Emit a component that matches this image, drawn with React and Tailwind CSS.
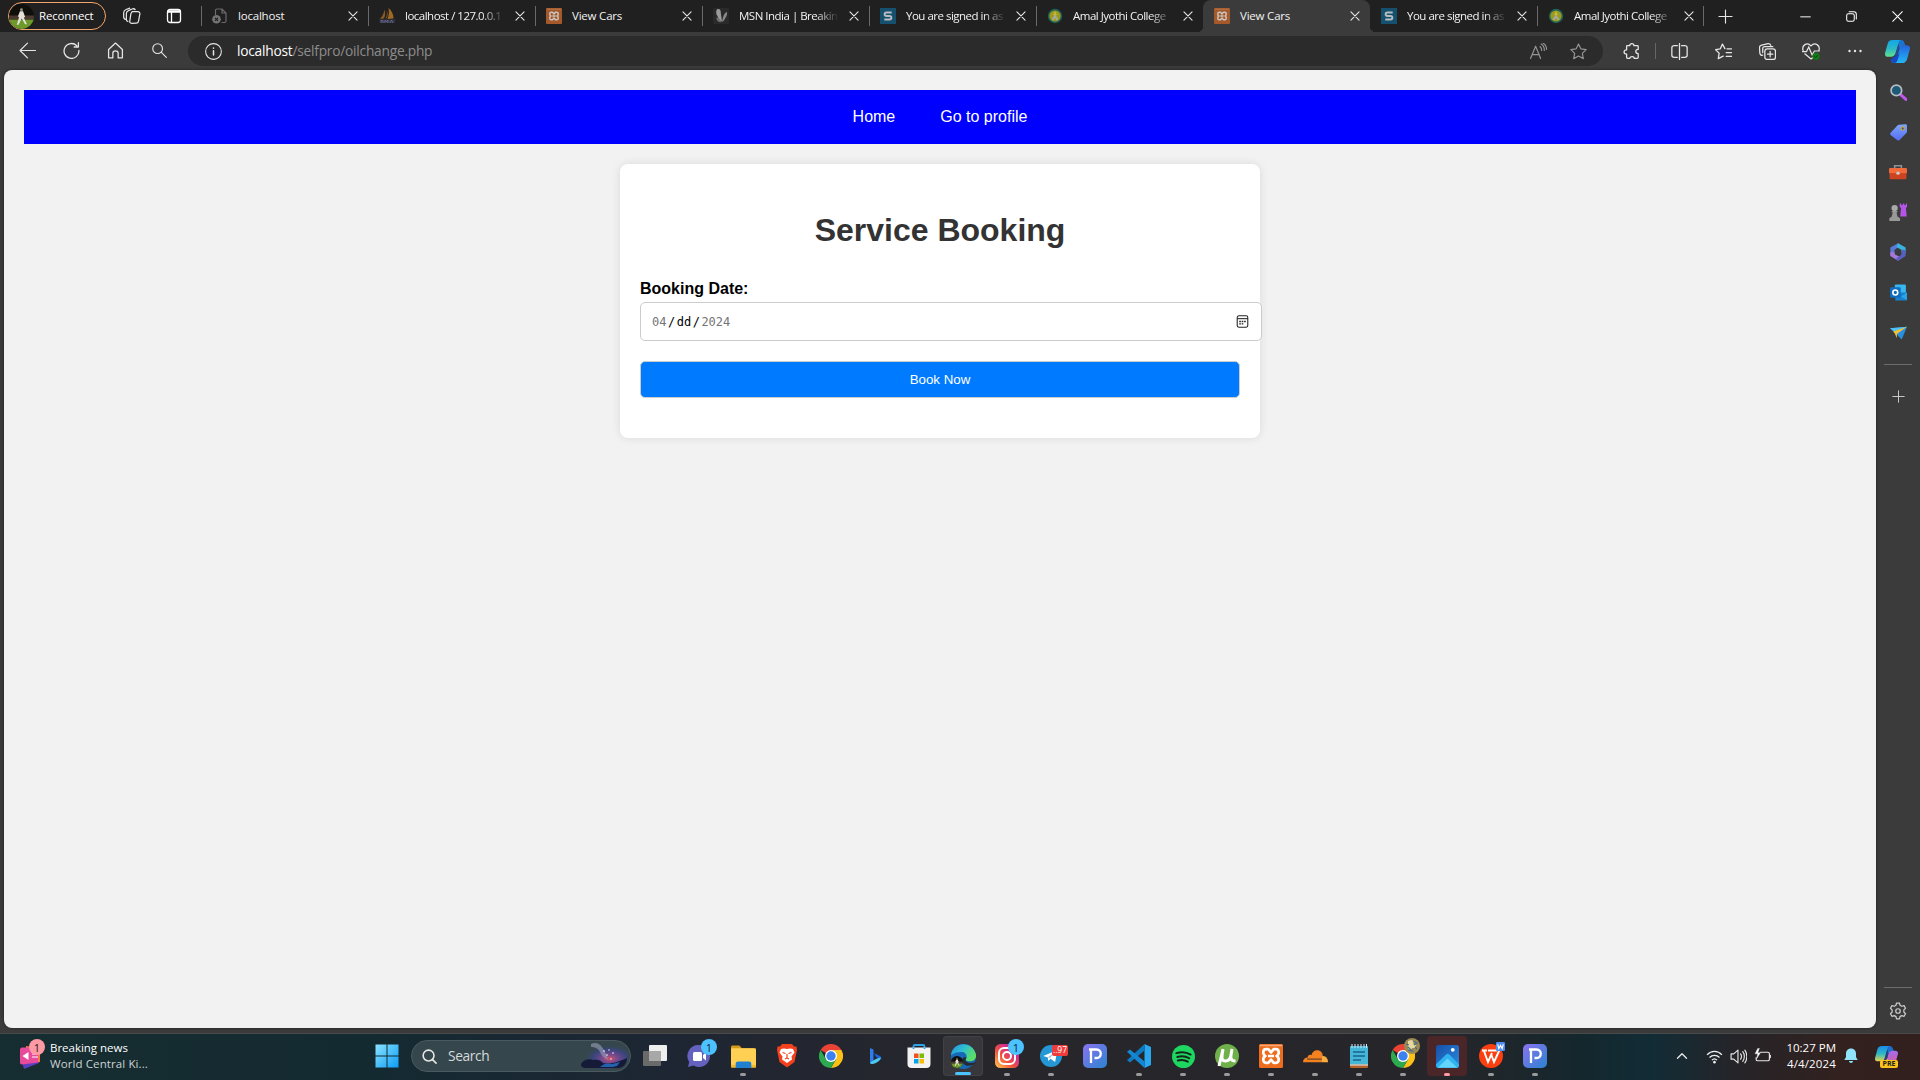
import React from "react";

const UI = "font-['Open_Sans','Noto_Sans',sans-serif]";

function Svg({ w = 16, h = w, vb = "0 0 16 16", children, className = "" }) {
  return (
    <svg width={w} height={h} viewBox={vb} fill="none" className={"shrink-0 " + className}>
      {children}
    </svg>
  );
}

const Line = ({ w = 16, children, c = "#e6e6e6", sw = 1.1, className }) => (
  <Svg w={w} className={className}>
    <g stroke={c} strokeWidth={sw} strokeLinecap="round" strokeLinejoin="round">{children}</g>
  </Svg>
);

/* ---------- favicons ---------- */

const PageIcon = () => (
  <Svg w={16}>
    <path d="M3.500 7V2.500c0-.8.5-1.500 1.500-1.500H10l4 4V13c0 1-.5 1.500-1.500 1.500H9.500M10 1v4h4" stroke="#6b6b6b" strokeWidth="1.200" />
    <circle cx="4.500" cy="11.300" r="4.300" fill="#747474" />
    <path d="M3 9.800l3 3M6 9.800l-3 3" stroke="#202020" strokeWidth="1.200" />
  </Svg>
);
const Pma = () => (
  <Svg w={17} h={16} vb="0 0 17 16">
    <path d="M5.500 1.500C6.500 5 6.300 8 5 10.500L1 11C3.500 8 5 5 5.500 1.500z" fill="#8a5a24" />
    <path d="M7.500 2C8.300 5 8 8 6.500 10.500h1C9 8 9 5 7.500 2z" fill="#8a5a24" />
    <path d="M9.500 0c3.500 3 5 6.500 5 10.500L8.500 11C10 7 10.200 4 9.500 0z" fill="#a06a22" />
    <path d="M0 11.500h16.500l-1 3.500H1.500z" fill="#34344a" />
    <path d="M2 15v-2.500h2V15M6 15v-3l1.500 2L9 12v3M11 15l1.500-3 1.500 3" stroke="#6c6c88" strokeWidth=".8" />
  </Svg>
);
const XamppMark = ({ c = "#c9c5c2" }) => (
  <path d="M5.200 4.200h1.300L8 6l1.500-1.800h1.300c1.800 0 2 3 .3 3.800 1.700.8 1.500 3.800-.3 3.800H9.500L8 10l-1.500 1.800H5.200c-1.800 0-2-3-.3-3.800-1.700-.8-1.500-3.800.3-3.800zM6.300 8h3.400" stroke={c} strokeWidth="1.500" strokeLinejoin="round" />
);
const Xampp = () => (
  <Svg w={16}>
    <rect width="16" height="16" rx="1" fill="#a5592a" />
    <path d="M1 1.200h14" stroke="#bd7a50" strokeWidth=".8" />
    <XamppMark />
  </Svg>
);
const Msn = () => (
  <Svg w={16}>
    <rect width="16" height="16" rx="1" fill="#2a2a2a" />
    <path d="M4.500 1c2.500-.5 3.500 1.500 3.300 4L9 13.500C6.500 13 5 10.500 4.500 8 2.800 6 2.800 2 4.500 1z" fill="#9a9a9a" />
    <path d="M13.800 4c1 2-1 6-3.300 9l-1.500 1C9.500 10 11 5 13.800 4z" fill="#8a8a8a" />
    <path d="M3.500 9.500c2.200 0 3.500 2 5 4.500C5.500 14.800 3 12.500 3.500 9.500z" fill="#6f6f6f" />
  </Svg>
);
const SIcon = () => (
  <Svg w={16}>
    <rect width="16" height="16" fill="#16506f" />
    <path d="M11.700 4.500H6.500c-2.500 0-2.500 3.500 0 3.500h3c2.500 0 2.500 3.500 0 3.500H4.300" stroke="#b5bcc0" strokeWidth="1.900" />
  </Svg>
);
const College = () => (
  <Svg w={16}>
    <circle cx="8" cy="8" r="7.200" fill="#1e6259" />
    <circle cx="8" cy="8" r="5.600" fill="#9a9a1e" />
    <path d="M8 3l2 3.500-2 1.500-2-1.500z" fill="#c8b53c" />
    <path d="M4.500 11.500L8 6.500l3.500 5-2 .8L8 10l-1.500 2.300z" fill="#a6a9a0" />
  </Svg>
);

/* ---------- browser tabs ---------- */

const tabs = [
  { t: "localhost", I: PageIcon, sep: true },
  { t: "localhost / 127.0.0.1", I: Pma, sep: true },
  { t: "View Cars", I: Xampp, sep: true },
  { t: "MSN India | Breakin", I: Msn, sep: true },
  { t: "You are signed in as", I: SIcon, sep: true },
  { t: "Amal Jyothi College", I: College, sep: true },
  { t: "View Cars", I: Xampp, active: true },
  { t: "You are signed in as", I: SIcon },
  { t: "Amal Jyothi College", I: College, sep: true },
];

function Tab({ t, I, sep, active }) {
  const long = t.length > 10;
  return (
    <div className={"relative flex h-8 w-[167px] shrink-0 items-center " + (active ? "rounded-t-lg bg-[#3b3b3b]" : "")}>
      {active && (
        <>
          <span className="absolute bottom-0 -left-[6px] size-[6px] bg-[radial-gradient(circle_at_top_left,#202020_6px,#3b3b3b_6.5px)]" />
          <span className="absolute -right-[6px] bottom-0 size-[6px] bg-[radial-gradient(circle_at_top_right,#202020_6px,#3b3b3b_6.5px)]" />
        </>
      )}
      <span className={"h-5 w-px shrink-0 " + (sep ? "bg-[#6a6a6a]" : "")} />
      <span className="ml-[10px] flex w-4 justify-center"><I /></span>
      <span
        className={
          "ml-[10px] w-[104px] shrink-0 text-[11.5px] whitespace-nowrap text-[#f2f2f2] " +
          (long
            ? "tracking-[-0.5px] [mask-image:linear-gradient(to_right,black_74%,transparent_96%)]"
            : "tracking-[-0.2px]")
        }
      >
        {t}
      </span>
      <Line w={10} sw={1.800} className="ml-[6px]"><path d="M1.500 1.500l13 13M14.500 1.500l-13 13" /></Line>
    </div>
  );
}

const Avatar = ({ size = 25 }) => (
  <Svg w={size} vb="0 0 24 24">
    <clipPath id={"av" + size}><circle cx="12" cy="12" r="12" /></clipPath>
    <g clipPath={`url(#av${size})`}>
      <rect width="24" height="24" fill="#0f0f0c" />
      <rect y="11" width="24" height="4" fill="#4a3a30" />
      <rect y="15" width="24" height="9" fill="#6d9a2a" />
      <circle cx="12" cy="5.500" r="1.400" fill="#9a8a7a" />
      <path d="M10.500 7h3l2 5.500-1.300.5 3 6.500h-1.800l-3.200-5.500-3 6H7.500l2.200-7.500-1.200-.5z" fill="#e4e0da" />
    </g>
  </Svg>
);

const Cell = ({ children, w = "w-11" }) => (
  <span className={"flex h-full shrink-0 items-center justify-center " + w}>{children}</span>
);

function TabStrip() {
  return (
    <div className="flex h-8 items-center bg-[#202020]">
      <div className="ml-2 flex h-7 w-[98px] items-center gap-[5px] rounded-full border border-[#f4a66d]">
        <Avatar />
        <span className="text-[11.5px] tracking-[-0.2px] text-white">Reconnect</span>
      </div>
      <span className="ml-[5px] flex"><Cell w="w-[42px]">
        <Line w={18}>
          <path d="M8 4.200l5.200 0c1.200 0 2 .8 1.800 2l-1.200 6.300c-.2 1.200-1 1.800-2 1.800L7.500 14.500c-1 0-1.700-.8-1.500-1.800L7 6z" />
          <path d="M4.300 12.800c-1-.2-1.300-.8-1.300-1.800V5.800C3 4.300 4 3.500 5.300 3l3-1.200c1-.4 2-.2 2.500.5M2 11C1 10.500.7 10 .6 9V5C.6 3.500 1.500 2.700 2.800 2.200L6 1" />
        </Line>
      </Cell></span>
      <Cell w="w-[42px]">
        <Line w={16} sw={1.300} c="#fff"><rect x="1.500" y="1.500" width="13" height="13" rx="2.500" /><path d="M2 4h12M2 3h12M5.500 4v10" /></Line>
      </Cell>
      <div className="ml-[6px] flex">{tabs.map((x, i) => <Tab key={i} {...x} />)}</div>
      <span className="-ml-px h-5 w-px bg-[#6a6a6a]" />
      <Cell w="w-[42px]"><Line w={15} sw={1.200}><path d="M8 1v14M1 8h14" /></Line></Cell>
      <span className="grow" />
      <Cell w="w-[46px]"><Line w={11} sw={1.400} c="#fff"><path d="M1 8.500h14" /></Line></Cell>
      <Cell w="w-[46px]"><Line w={11} sw={1.500} c="#fff"><rect x="1" y="4" width="11" height="11" rx="2.500" /><path d="M4.500 1.200h7c2 0 3.500 1.500 3.500 3.500v7" /></Line></Cell>
      <Cell w="w-[46px]"><Line w={11} sw={1.500} c="#fff"><path d="M1 1l14 14M15 1L1 15" /></Line></Cell>
    </div>
  );
}

const CopilotLogo = ({ w = 25, pre }) => (
  <Svg w={w} vb="0 0 24 24">
    <defs>
      <linearGradient id={"ca" + w} x1="0" y1="0" x2="0" y2="1">
        <stop offset="0" stopColor={pre ? "#1e8ae6" : "#14a5e8"} /><stop offset=".5" stopColor="#2ab8c8" /><stop offset="1" stopColor={pre ? "#e8d24a" : "#5fe08a"} />
      </linearGradient>
      <linearGradient id={"cb" + w} x1="0" y1="0" x2="0" y2="1">
        <stop offset="0" stopColor={pre ? "#a56cf0" : "#2463dd"} /><stop offset="1" stopColor={pre ? "#e0588a" : "#22b8f5"} />
      </linearGradient>
    </defs>
    <path d="M11 20l3-11c.6-2 2-3 4-3h2.500c3 0 4 1.500 3.300 4l-2.500 9c-.7 2.500-2 4-4.500 4H9c-2 0-3-1-3.400-3z" fill={`url(#cb${w})`} />
    <path d="M5.500 20c.5 2 1.500 3 3.500 3 1.700 0 2.500-1 3-2.500l2-6.500-4 2z" fill={pre ? "#f0b040" : "#1749c4"} />
    <path d="M13 4l-3 10c-.7 2-2 3-4 3H3C.5 17-.5 15.500.2 13l2.500-9C3.400 2 5 1 7 1h8c2 0 3 1.200 3.500 3 .3 1 .8 2 2 2H18c-2 0-3.500 1-4 3z" fill={`url(#ca${w})`} />
    <path d="M13 4c.5-2 1.200-3 2.500-3 1.700 0 2.700 1.200 3.200 3l.7 2H18c-2 0-3.500 1-4 3l-2 6-2.500 1z" fill="#1b55c8" opacity=".65" />
  </Svg>
);

function Toolbar() {
  return (
    <div className="flex h-[38px] items-center bg-[#3b3b3b] pl-[6px]">
      <div className="-ml-px mr-px flex h-full -translate-y-px">
        <Cell><Line w={17}><path d="M15.500 8H1M8 1L1 8l7 7" /></Line></Cell>
        <Cell><Line w={17} sw={1.200}><path d="M13 3.500a7 7 0 1 0 2 4.500M14.500 .7v4h-4" /></Line></Cell>
        <Cell><Line w={17} sw={1.200}><path d="M1.500 7L8 1l6.500 6v7.500c0 .4-.2.500-.6.500H10.500v-4.500c0-3-5-3-5 0V15H2c-.4 0-.5-.2-.5-.5z" /></Line></Cell>
        <Cell><Line w={15} sw={1.200}><circle cx="6" cy="6" r="5.200" /><path d="M10 10l5.300 5.300" /></Line></Cell>
      </div>
      <div className="ml-[6px] flex h-[30px] w-[1415px] shrink-0 items-center rounded-full bg-[#2b2b2b] pl-[17px]">
        <Line w={17} sw={1}><circle cx="8" cy="8" r="7.400" /><path d="M8 7.300v4M8 4.600v.4" strokeWidth="1.400" /></Line>
        <span className="ml-[15px] text-[13.75px] tracking-[-0.24px] text-[#8d8d8d]"><span className="text-white">localhost</span>/selfpro/oilchange.php</span>
        <span className="grow" />
        <Cell w="w-10">
          <Line w={17} c="#959595"><path d="M.5 14.500L5.300 3 10 14.500M2 11h6.500M9.500 3.500c1 .8 1.500 2 1.500 3.500M10.500 1c2 1.200 3 3 3 6M12.500.2C14.500 1.500 15.600 3.500 15.600 6" /></Line>
        </Cell>
        <span className="mr-[5px] h-full"><Cell w="w-10">
          <Line w={17} c="#959595"><path d="M8 1l2.200 4.500 5 .7-3.600 3.500.9 5L8 12.300l-4.500 2.400.9-5L.8 6.200l5-.7z" /></Line>
        </Cell></span>
      </div>
      <span className="ml-[6px] h-full"><Cell><Line w={17} sw={1.200}><path d="M4 2.500h2.300c0-2.500 4-2.500 4 0h3.200c.6 0 .8.3.8.8V6c-3 0-3 4 0 4v3.500c0 .6-.3.9-.9.900H10.500c0-2.200-4-2.200-4 0H4.300c-.6 0-.9-.3-.9-.9V10.500c-3.200 0-3.200-4 0-4V3.200c0-.4.2-.7.600-.7z" /></Line></Cell></span>
      <span className="mr-px ml-[2px] h-4 w-px shrink-0 bg-[#666]" />
      <Cell><Line w={17} sw={1.200}><path d="M8 .5v15M6 2.500H3.200C2 2.500.8 3 .8 4.500v7c0 1.400 1 2 2.400 2H6M10 2.500h2.800c1.400 0 2.400.6 2.400 2v7c0 1.400-1 2-2.400 2H10" /></Line></Cell>
      <Cell><Line w={17} sw={1.200}><path d="M11.300 5.500h4.200M10.500 9h5M10.500 12.500h5M9.300 5.300L7 1 5 5.500.6 6.300l3.300 3.200-.8 5.200 4.600-2.400" /></Line></Cell>
      <Cell><Line w={17} sw={1.200}><rect x="5.500" y="5.500" width="10" height="10" rx="2.200" /><path d="M10.500 8v5M8 10.500h5M3.500 11.500C2 11.800 1 11 .8 9.500L.5 4.500C.4 3 1 2.300 2.500 2l6-1.300c1.300-.2 2 .3 2.500 1.500M3.500 9V5.500c0-1.300.7-2 2-2H13" /></Line></Cell>
      <Cell>
        <Svg w={18}>
          <path d="M1 7.500C-.5 3 4.500-.5 8 3.500c3.500-4 8.500-.5 7 4M2.500 10.500L8 15l1.500-1M.5 8.500H4L6 4.500l3 7L11 8h4.500" stroke="#e6e6e6" strokeWidth="1.100" strokeLinecap="round" />
          <circle cx="12.500" cy="12.700" r="3.200" fill="#117a17" />
          <path d="M11 12.800l1.100 1 1.900-2" stroke="#073d0a" strokeWidth=".8" />
        </Svg>
      </Cell>
      <Cell><Svg w={16}><g fill="#e6e6e6"><circle cx="2.500" cy="8" r="1.200" /><circle cx="8" cy="8" r="1.200" /><circle cx="13.500" cy="8" r="1.200" /></g></Svg></Cell>
      <Cell w="w-10"><CopilotLogo /></Cell>
    </div>
  );
}

/* ---------- sidebar ---------- */

function Sidebar() {
  const row = "flex h-10 items-center justify-center";
  return (
    <div className="ml-px flex w-[42px] flex-col items-stretch pt-[2px]">
      <div className={row}><Svg w={17}><path d="M10.500 10.500l4.500 4" stroke="#c155f0" strokeWidth="2.800" strokeLinecap="round" /><circle cx="6" cy="6" r="5" fill="#1e5a78" stroke="#b5bcc0" strokeWidth="1.600" /></Svg></div>
      <div className={row}><Svg w={17}>
        <defs><linearGradient id="tg" x1="0" y1="0" x2="0" y2="1"><stop stopColor="#7aa8ff" /><stop offset="1" stopColor="#566cf0" /></linearGradient></defs>
        <path d="M8.500.8L14.500.3c1 0 1.500.5 1.500 1.500V7c0 .8-.3 1.300-.8 1.800L9 15c-.8.800-1.500.8-2.300 0L.8 10.500c-.8-.6-.8-1.500-.2-2.200L7 1.500c.4-.4.9-.6 1.500-.7z" fill="url(#tg)" />
        <circle cx="12" cy="4.200" r="1.500" fill="#39428a" stroke="#d8a91c" strokeWidth="1" />
      </Svg></div>
      <div className={row}><Svg w={18}>
        <path d="M5 5V2.500h6V5" stroke="#8d9296" strokeWidth="1.400" />
        <rect y="4.500" width="16" height="5" rx="1" fill="#f06a3a" /><rect x=".5" y="9" width="15" height="5.500" rx="1" fill="#cf4420" />
        <circle cx="8" cy="9" r="1.500" fill="#c9cdd0" />
      </Svg></div>
      <div className={row}><Svg w={18}>
        <path d="M9.500.5h1.300v1.200h1.400V.5h1.400v1.200H15V.5h1v3l-1 1 .8 7.500H10l.7-7.500-1.200-1z" fill="#b455e8" />
        <circle cx="5" cy="4.500" r="2.800" fill="#a9a9a9" /><path d="M2.500 7h5v1.200H6.700L7.500 12l2.300 1.500V16H.3v-2.500L2.500 12l.8-3.800h-.8z" fill="#989898" />
      </Svg></div>
      <div className={row}><Svg w={18}>
        <path d="M8 .2L1.200 4v7.500L5 9.500V6L10.500 2z" fill="#5a78d8" /><path d="M8 .2l6.800 3.800v5L11 8V6L6.500 3.500z" fill="#38b4e0" />
        <path d="M1.200 8v3.500L8 15.800l3.500-2.500L5 10V8.500z" fill="#a578dc" /><path d="M14.800 6.500v5L8 15.800l-2-1.500 5-3.800V6z" fill="#5560c0" />
      </Svg></div>
      <div className={row}><Svg w={17}>
        <rect x="4.500" y=".5" width="10.500" height="9" rx="1" fill="#38b6ee" /><path d="M5 8h11v6.500c0 .6-.4 1-1 1H5z" fill="#1482cf" /><path d="M16 8l-6 4 6 3z" fill="#2ba3e6" />
        <rect y="3" width="10" height="10" rx="1" fill="#0f6cbd" /><circle cx="5" cy="8" r="2.300" stroke="#fff" strokeWidth="1.500" />
      </Svg></div>
      <div className={row}><Svg w={17}><path d="M0 4L16 2.500l-5 12L6.500 10z" fill="#268fe0" /><path d="M0 4l16-1.500L4.500 7.500z" fill="#4dc3f5" /><path d="M3 7l13-4.500L6.500 9.500v4L4.500 9z" fill="#f5bf35" /></Svg></div>
      <div className="mx-[7px] mt-[12px] h-px bg-[#6c6c6c]" />
      <div className="mt-[11px] flex h-10 items-center justify-center"><Line w={13} sw={1.200} c="#ccc"><path d="M8 1v14M1 8h14" /></Line></div>
      <span className="grow" />
      <div className="mx-[7px] h-px bg-[#6c6c6c]" />
      <div className="flex h-[45px] items-center justify-center">
        <Line w={18} c="#ccc"><circle cx="8" cy="8" r="2" /><path d="M6.700.9h2.600l.5 2 1.500.9 2.100-.6 1.300 2.300-1.500 1.500v1.900l1.500 1.500-1.300 2.300-2.100-.6-1.500.9-.5 2H6.700l-.5-2-1.500-.9-2.100.6-1.300-2.300L2.800 8.900V7L1.300 5.500l1.300-2.300 2.100.6 1.500-.9z" /></Line>
      </div>
    </div>
  );
}

/* ---------- web page ---------- */

function WebPage() {
  return (
    <main className="ml-1 h-[958px] w-[1872px] rounded-lg bg-[#f2f2f2] p-5 font-['Liberation_Sans',Arial,sans-serif] text-base shadow-[0_0_3px_rgba(0,0,0,0.5)]">
      <nav className="flex h-[54px] items-center justify-center gap-[45px] bg-[#0000ff] leading-none text-white">
        <a>Home</a>
        <a>Go to profile</a>
      </nav>
      <section className="mx-auto mt-5 h-[274px] w-[640px] rounded-lg bg-white px-5 pt-px shadow-[0_0_10px_rgba(0,0,0,0.1)]">
        <h1 className="mt-[47px] text-center text-[32px] leading-9 font-bold text-[#333]">Service Booking</h1>
        <div className="mt-[32px] leading-[18px] font-bold text-black">Booking Date:</div>
        <div className="mt-[4px] flex h-[39px] w-[622px] items-center rounded-[5px] border border-[#ccc] bg-white pr-[12px] pl-[11px] font-['DejaVu_Sans_Mono',monospace] text-[12px] text-[#757575]">
          <span>04</span><span className="mx-[1.5px] text-black">/</span><span className="text-black">dd</span><span className="mx-[1.5px] text-black">/</span><span>2024</span>
          <span className="grow" />
          <Svg w={13}>
            <rect x="1.500" y="1" width="13" height="14" rx="2" stroke="#222" strokeWidth="1.300" /><path d="M1.500 4.500h13" stroke="#222" strokeWidth="1.300" />
            <path d="M4 8h2M7 8h2M10 8h2M4 11h2M7 11h2" stroke="#222" strokeWidth="1.600" />
          </Svg>
        </div>
        <button className="mt-[20px] flex h-[37px] w-[600px] items-center justify-center rounded-[5px] border border-[#ccc] bg-[#007bff] text-[13.33px] text-white">Book Now</button>
      </section>
    </main>
  );
}

/* ---------- taskbar ---------- */

const ChromeLogo = () => (
  <Svg w={24} vb="0 0 24 24">
    <path d="M12 12L1.600 6A12 12 0 0 1 22.400 6z" fill="#ea4335" />
    <path d="M12 6h10.400A12 12 0 0 1 12 24l5.200-9z" fill="#fbc116" />
    <path d="M6.800 15L1.600 6A12 12 0 0 0 12 24l5.200-9z" fill="#2da94f" />
    <circle cx="12" cy="12" r="6" fill="#fff" /><circle cx="12" cy="12" r="4.700" fill="#3b82f0" />
  </Svg>
);
const PIcon = () => (
  <Svg w={24} vb="0 0 24 24">
    <defs><linearGradient id="pg" x1="0" y1="0" x2="1" y2="1"><stop stopColor="#8a72f0" /><stop offset="1" stopColor="#2b84d0" /></linearGradient></defs>
    <rect width="24" height="24" rx="5" fill="url(#pg)" />
    <path d="M6 5.500h7.500c5.700 0 5.700 8.500 0 8.500H11.500M8 4.500v14.500" stroke="#fff" strokeWidth="2.300" />
  </Svg>
);
const Badge = ({ children, className }) => (
  <span className={"absolute flex items-center justify-center leading-none " + className}>{children}</span>
);

const apps = [
  { n: "task-view", el: <Svg w={24} vb="0 0 24 24"><rect x="6" y="1" width="18" height="16" rx="1" fill="#eee" /><rect y="7" width="18" height="15" rx="1" fill="#6a6a6a" /><rect x="6" y="7" width="12" height="10" fill="#a8a8a8" /></Svg> },
  { n: "chat", el: <Svg w={24} vb="0 0 24 24"><path d="M12 1a11 11 0 1 1-5.500 20.500L1 23l1.200-5A11 11 0 0 1 12 1z" fill="#6561bf" /><rect x="6" y="8" width="9" height="9" rx="1.500" fill="#fff" /><path d="M16 11l3-2.500v8L16 14z" fill="#fff" /></Svg>, badge: "chat" },
  { n: "files", run: true, el: <Svg w={25} vb="0 0 24 24"><path d="M0 3c0-1 .5-1.500 1.500-1.500H8L10.500 4H22v8H0z" fill="#d69a18" /><rect y="4" width="24" height="18.500" rx="1" fill="#ffd054" /><path d="M0 20h24v2.500H0z" fill="#f5b92e" /><path d="M4.500 23v-4c0-1.500 1-2.300 2.300-2.300h10.400c1.300 0 2.300.8 2.300 2.300v4z" fill="#1f7fd0" /></Svg> },
  { n: "brave", el: <Svg w={24} vb="0 0 24 24"><path d="M7 0h10l2 2.500 2.500 0L22 6l-2.500 12L12 23.500 4.500 18 2 6l.5-3.500H5z" fill="#f4401c" /><path d="M6 5l3-.5L12 5l3-.5 3 .5 1.500 3.500-3 4 .5 3L12 19l-5-3.500.5-3-3-4z" fill="#fff" /><path d="M7.500 8.500l3 1M16.500 8.500l-3 1M12 10v4l-2 1M12 14l2 1" stroke="#f4401c" strokeWidth="1.200" /></Svg> },
  { n: "chrome", el: <ChromeLogo /> },
  { n: "bing", el: <Svg w={20} vb="0 0 20 20"><path d="M5 2l3.500 1.500v11L5 17z" fill="#2f7be8" /><path d="M9 7l6 3c1.500 1 1.500 2.500 1 3.500L11 11z" fill="#1a62d8" /><path d="M5 16.500l4-2.500 3-1.500 3.500-1c1.500 2-5 6.500-8 6.500-1.500 0-2.500-.5-2.500-1.500z" fill="#4cc9f0" /></Svg> },
  { n: "store", el: <Svg w={24} vb="0 0 24 24"><path d="M6.500 5V2.500c0-1 .5-1.500 1.500-1.500h8c1 0 1.500.5 1.500 1.500V5" stroke="#2ea3ea" strokeWidth="1.800" /><path d="M.5 3.500h23V20c0 2.500-1.500 4-4 4H4.500c-2.500 0-4-1.500-4-4z" fill="#f2f2f2" /><path d="M6.500 5V3.500M17.500 5V3.500" stroke="#2ea3ea" strokeWidth="1.800" /><path d="M7 9.500h4.500V14H7z" fill="#f25022" /><path d="M12.500 9.500H17V14h-4.500z" fill="#7fba00" /><path d="M7 15h4.500v4.500H7z" fill="#00a4ef" /><path d="M12.500 15H17v4.500h-4.500z" fill="#ffb900" /></Svg> },
  { n: "edge", active: true, el: <Svg w={25} vb="0 0 24 24"><defs><linearGradient id="eg" x1="0" y1="0" x2="1" y2=".5"><stop stopColor="#2390dd" /><stop offset=".5" stopColor="#30bfd0" /><stop offset="1" stopColor="#5be062" /></linearGradient></defs><circle cx="12" cy="12" r="12" fill="#1868b8" /><path d="M0 11C1-2 20-4 24 10c1 5-4 8-9 6-2-1-.5-2 0-4 0-3-3-5-7-4-4 0-7 2-8 3z" fill="url(#eg)" /><path d="M24 17c-3 1.500-7 1.500-9 0-2-1-.5-3 0-4-3-1-5 1-4 4 1 4 6 5 10 3 1.500-.8 2.500-2 3-3z" fill="#252a35" /></Svg>, badge: "edge" },
  { n: "instagram", run: true, el: <Svg w={24} vb="0 0 24 24"><defs><linearGradient id="ig" x1="0" y1="1" x2="1" y2="0"><stop stopColor="#ffd04f" /><stop offset=".4" stopColor="#f2503c" /><stop offset=".7" stopColor="#d02e90" /><stop offset="1" stopColor="#5b4ee0" /></linearGradient></defs><rect width="24" height="24" rx="5.500" fill="url(#ig)" /><rect x="4" y="4" width="16" height="16" rx="5" stroke="#fff" strokeWidth="2" /><circle cx="12" cy="12" r="4" stroke="#fff" strokeWidth="2" /></Svg>, badge: "one" },
  { n: "telegram", run: true, el: <Svg w={22} vb="0 0 24 24"><circle cx="12" cy="12" r="12" fill="#2597d4" /><path d="M3.500 12L19 5.500l-2.500 13-5-3.500-2.500 2.500-.5-4z" fill="#fff" /><path d="M8.500 13.500l7-5-4.500 5.500z" fill="#8bbedc" /></Svg>, badge: "tg" },
  { n: "p1", el: <PIcon /> },
  { n: "code", run: true, el: <Svg w={24} vb="0 0 24 24"><path d="M17.500 0L24 3v18l-6.500 3z" fill="#29a8f0" /><path d="M17.500 0v6.500L3 18.500l-3-2.300z" fill="#0d79c2" /><path d="M17.500 24v-6.500L3 5.500 0 7.800z" fill="#1487d4" /></Svg> },
  { n: "spotify", run: true, el: <Svg w={23} vb="0 0 24 24"><circle cx="12" cy="12" r="12" fill="#1ed760" /><path d="M4.500 8.500c5-1.500 11-1 15 1.500M5.500 12.500c4-1.200 9-.8 12.500 1.300M6 16.200c3.500-1 7.500-.6 10.500 1.200" stroke="#15251a" strokeWidth="2" strokeLinecap="round" /></Svg> },
  { n: "torrent", run: true, el: <Svg w={24} vb="0 0 24 24"><circle cx="12" cy="12" r="12" fill="#6fb04a" /><path d="M8 5l-4 17M8 6c-2 9-1 11 2.500 11s5-3 5.500-6l1-6M17 5c-1.500 8-2.500 12 3.500 12" stroke="#fff" strokeWidth="3" /></Svg> },
  { n: "xampp", run: true, el: <Svg w={24}><rect width="16" height="16" rx="1" fill="#ee6c1c" /><path d="M.5 1h15" stroke="#f7a878" strokeWidth="1" /><g transform="translate(-1.600 -1.600) scale(1.200)"><XamppMark c="#fff" /></g></Svg> },
  { n: "cloudflare", run: true, el: <Svg w={25} vb="0 0 24 24"><path d="M0 17.500c0-3 2-4.500 4.500-4.500 0-2.500 2-3 3.500-2.300C9 7.500 11 6 13.500 6c3.500 0 5.500 2.500 5.500 5.500l-1.500 6z" fill="#f48120" /><path d="M18.500 11.500c3.500-.5 5.500 2.500 5.500 6h-6.500z" fill="#faad3f" /><path d="M4 14.500h14" stroke="#26262a" strokeWidth=".8" /></Svg> },
  { n: "notepad", run: true, el: <Svg w={24} vb="0 0 24 24"><rect x="3" y="2" width="18" height="20" rx="1" fill="#45b5d8" /><path d="M3 20.500h18v2c0 .8-.4 1.500-1 1.500H4c-.6 0-1-.7-1-1.500z" fill="#b5622a" /><path d="M3 20.500h18v1H3z" fill="#eee" /><path d="M5 0v4M8 0v4M11 0v4M14 0v4M17 0v4M19.500 0v4" stroke="#d5e8ef" strokeWidth="1" /><path d="M6 8h12M6 12h12M6 16h8" stroke="#17648a" strokeWidth="1.700" /></Svg> },
  { n: "chrome2", run: true, el: <ChromeLogo />, badge: "cr" },
  { n: "photos", alert: true, el: <Svg w={23} vb="0 0 24 24"><defs><linearGradient id="ph" x1="0" y1="0" x2="1" y2="1"><stop stopColor="#174ea8" /><stop offset="1" stopColor="#2a8ce0" /></linearGradient></defs><rect width="24" height="24" rx="2.500" fill="url(#ph)" /><path d="M0 20l10.500-10c1-1 2.500-1 3.500 0L24 20v1.500c0 1.500-1 2.500-2.500 2.500h-19C1 24 0 23 0 21.500z" fill="#2fb2ef" /><path d="M2 23.500L12 14l10 9.500z" fill="#63d4fa" /><circle cx="17.500" cy="5" r="2" fill="#fff" /></Svg> },
  { n: "wps", run: true, el: <Svg w={24} vb="0 0 24 24"><circle cx="12" cy="12" r="12" fill="#fb3f10" /><path d="M3 6.500h5M5 7l4 11 4-9M9 6.500h5l4 0M12 10l3 8 5.500-12" stroke="#fff" strokeWidth="1.900" /></Svg>, badge: "wps" },
  { n: "p2", run: true, el: <PIcon /> },
];

const badges = {
  chat: <Badge className="-top-[5px] -right-[6px] size-[16px] rounded-full bg-[#4cc2ff] text-[11px] text-[#123]">1</Badge>,
  one: <Badge className="-top-[5px] -right-[5px] size-[16px] rounded-full bg-[#4cc2ff] text-[11px] text-[#123]">1</Badge>,
  tg: <Badge className="top-0 -right-[6px] h-[11px] w-[16px] rounded-[2px] bg-[#ee3b3b] text-[8.5px] text-white">..97</Badge>,
  edge: <Badge className="top-[12px] left-0"><Avatar size={12} /></Badge>,
  cr: <Badge className="-top-[6px] -right-[5px]"><Svg w={16}><circle cx="8" cy="8" r="8" fill="#9c8a54" /><path d="M4 3l3-1 3 1-1 3 3 1-1 3-3 0-1 3-3-2 0-4z" fill="#e6d9a0" /><path d="M9 3l4 2-3 2M4 9l4 4-4-1M11 9l2 2M2 6l3 1" stroke="#436b8a" strokeWidth="1.200" /></Svg></Badge>,
  wps: <Badge className="-top-[2px] -right-[2px]"><Svg w={9}><rect width="16" height="16" rx="2" fill="#4b8cf5" /><path d="M3 4l2 8 3-6 3 6 2-8" stroke="#fff" strokeWidth="2" /></Svg></Badge>,
};

function TaskApp({ el, run, active, alert, badge }) {
  const tile = active ? "bg-white/8 border border-white/5" : alert ? "bg-[#4a2628]" : "";
  const mark = active ? "w-4 bg-[#4cc2ff]" : alert ? "w-[6px] bg-[#ff99a4]" : run ? "w-[6px] bg-[#9a9a9a]" : "w-0";
  return (
    <div className="flex w-11 shrink-0 items-center justify-center">
      <div className={"relative flex h-10 w-10 items-center justify-center rounded " + tile}>
        <span className="relative">{el}{badge && badges[badge]}</span>
        <span className={"absolute bottom-0 h-[3px] rounded-full " + mark} />
      </div>
    </div>
  );
}

function Taskbar() {
  return (
    <footer className="flex h-[47px] items-center border-t border-[#47494b] bg-[linear-gradient(to_right,#162d31_0,#142a31_380px,#1d2633_650px,#24262f_850px,#27272b_1000px,#26262a_1440px,#14272d_1580px,#122c36_1650px,#262428_1740px,#32211f_1840px,#32201e_1920px)] pb-[2px]">
      <div className="flex w-[365px] items-center pl-[18px]">
        <div className="relative h-8 w-[28px]">
          <Svg w={24} h={30} vb="0 0 24 30">
            <path d="M4 22l17-4v5L6 29z" fill="#5a3fc0" />
            <path d="M8 6l14 2v14H8z" fill="#f57a4a" /><path d="M2 10c0-1.500.6-2.500 2-2.500h14c1.500 0 2 1 2 2.500v12.500L4 24.500c-1.200 0-2-1-2-2z" fill="#e84a9c" />
            <path d="M4.500 16l6-4v8z" fill="#fff" /><path d="M14 14h6M14 17h6" stroke="#fff" strokeWidth="1.200" />
          </Svg>
          <Badge className="-top-[1px] left-[11px] size-[16px] rounded-full bg-[#ff99a4] text-[11px] text-[#2a1a1c]">1</Badge>
        </div>
        <div className="ml-[4px] text-[11.5px] leading-4 whitespace-nowrap text-white">
          <div className="tracking-[-0.02px]">Breaking news</div>
          <div className="tracking-[0.1px] text-[#cdd3d5]">World Central Ki...</div>
        </div>
      </div>
      <Cell w="w-[44px]"><Svg w={24} vb="0 0 24 24">
        <defs><linearGradient id="wg" x1="0" y1="0" x2="1" y2="1"><stop stopColor="#8be4ff" /><stop offset="1" stopColor="#0a9cf5" /></linearGradient></defs>
        <path d="M.5.5h11v11H.5zM12.500.5h11v11h-11zM.5 12.500h11v11H.5zM12.500 12.500h11v11h-11z" fill="url(#wg)" />
      </Svg></Cell>
      <div className="ml-[2px] flex h-8 w-[220px] shrink-0 items-center rounded-full border border-[#4a5a5f] bg-[#35474c] pl-[10px]">
        <Line w={15} sw={1.700}><circle cx="7" cy="7" r="5.800" /><path d="M11.300 11.300l3.700 3.700" /></Line>
        <span className="ml-[11px] text-[13.75px] tracking-[-0.35px] text-[#d5dadb]">Search</span>
        <span className="grow" />
        <Svg w={48} h={28} vb="0 0 48 28" className="mr-[2px]">
          <defs>
            <radialGradient id="sg" cx=".6" cy=".6" r=".55"><stop stopColor="#d0556a" /><stop offset=".3" stopColor="#74498f" /><stop offset=".65" stopColor="#3a4484" stopOpacity=".85" /><stop offset="1" stopColor="#35474c" stopOpacity="0" /></radialGradient>
          </defs>
          <ellipse cx="25" cy="14" rx="24" ry="13" fill="url(#sg)" />
          <path d="M11 2c4-2 8-1 11 3s5 9 6 13c-4-2-7-5-8-8S15 5 11 5z" fill="#9aa0b8" opacity=".6" />
          <path d="M1 22c2-4 8-6 12-4 4-1 8 0 10 3 8 2 17-2 24-5 0 6-4 10-9 10H6c-3 0-5-1-5-3z" fill="#141a38" />
          <path d="M20 25c4-4 8-4 12-3l8-2-3 4-4 1z" fill="#2462ae" />
          <g fill="#fff"><circle cx="24" cy="9" r=".8" /><circle cx="29" cy="8" r=".7" /><circle cx="27" cy="13" r=".8" /><circle cx="33" cy="11" r=".8" /><circle cx="31" cy="17" r=".7" /></g>
        </Svg>
      </div>
      <div className="ml-[2px] flex">{apps.map((a) => <TaskApp key={a.n} {...a} />)}</div>
      <span className="grow" />
      <Cell w="w-8"><Line w={12} sw={1.800}><path d="M2 11l6-6 6 6" /></Line></Cell>
      <Cell w="w-8"><Svg w={17}><path d="M1 6.500c4-4.300 10-4.300 14 0M3.300 9c2.700-2.800 6.700-2.800 9.400 0M5.600 11.400c1.400-1.400 3.400-1.400 4.800 0" stroke="#f0f0f0" strokeWidth="1.200" /><circle cx="8" cy="13.300" r="1.200" fill="#f0f0f0" /></Svg></Cell>
      <Cell w="w-4"><Line w={17}><path d="M1 5.500h2.500L7.500 2v12l-4-3.500H1zM10 5.500c1 1.500 1 3.500 0 5M12 3.500c2 2.500 2 6.500 0 9M14 2c2.500 3.500 2.500 8.500 0 12" /></Line></Cell>
      <Cell w="w-8"><Line w={17}><path d="M6 4h7c1 0 1.500.5 1.500 1.500v5c0 1-.5 1.500-1.500 1.500H3.500c-1 0-1.500-.5-1.500-1.500V9M15.700 7v2" /><path d="M3.500.5L1 5.500h2.500L2.500 10 6 4.500H3.500L5 .5z" fill="#fff" strokeWidth=".4" /></Line></Cell>
      <div className="w-[58px] text-right text-[11.5px] leading-4 whitespace-nowrap text-white"><div>10:27 PM</div><div className="tracking-[0.15px]">4/4/2024</div></div>
      <Cell w="w-[30px]"><Svg w={16}><path d="M8 .5c3 0 5 2.200 5 5V9l1.700 3H1.300L3 9V5.500c0-2.800 2-5 5-5zM6 13h4c0 2.500-4 2.500-4 0z" fill="#8fe3fb" /></Svg></Cell>
      <span className="relative mr-[21px] ml-[9px] flex w-[24px]">
        <CopilotLogo w={23} pre />
        <Badge className="top-[15px] left-[5px] h-[8px] w-[18px] rounded-[2px] bg-[#fbc21a] text-[7px] font-bold text-[#222]">PRE</Badge>
      </span>
    </footer>
  );
}

export default function App() {
  return (
    <div className={"flex h-[1080px] w-[1920px] flex-col overflow-hidden bg-[#3b3b3b] " + UI}>
      <TabStrip />
      <Toolbar />
      <div className="flex h-[963px] shrink-0">
        <WebPage />
        <Sidebar />
      </div>
      <Taskbar />
    </div>
  );
}
